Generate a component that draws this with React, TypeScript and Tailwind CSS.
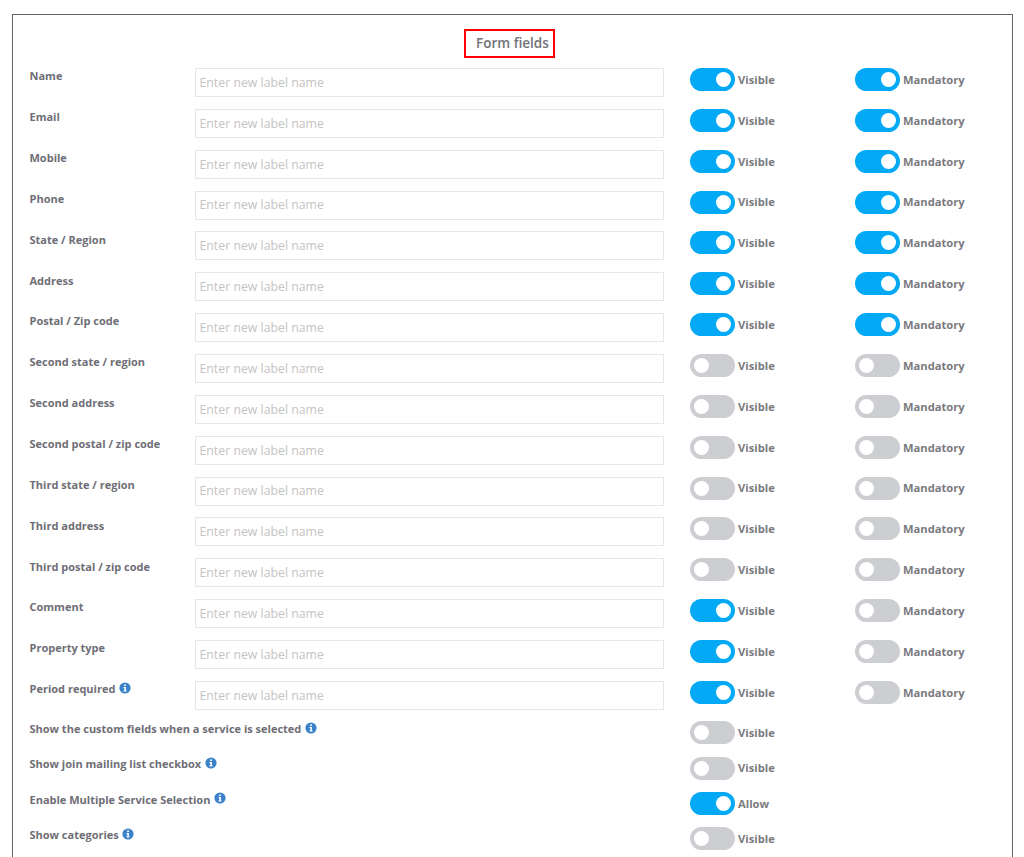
import React from "react";

type Row = { label: string; visible: boolean; mandatory: boolean; info?: boolean };

const rows: Row[] = [
  { label: "Name", visible: true, mandatory: true },
  { label: "Email", visible: true, mandatory: true },
  { label: "Mobile", visible: true, mandatory: true },
  { label: "Phone", visible: true, mandatory: true },
  { label: "State / Region", visible: true, mandatory: true },
  { label: "Address", visible: true, mandatory: true },
  { label: "Postal / Zip code", visible: true, mandatory: true },
  { label: "Second state / region", visible: false, mandatory: false },
  { label: "Second address", visible: false, mandatory: false },
  { label: "Second postal / zip code", visible: false, mandatory: false },
  { label: "Third state / region", visible: false, mandatory: false },
  { label: "Third address", visible: false, mandatory: false },
  { label: "Third postal / zip code", visible: false, mandatory: false },
  { label: "Comment", visible: true, mandatory: false },
  { label: "Property type", visible: true, mandatory: false },
  { label: "Period required", visible: true, mandatory: false, info: true },
];

const extras = [
  { label: "Show the custom fields when a service is selected", on: false, text: "Visible" },
  { label: "Show join mailing list checkbox", on: false, text: "Visible" },
  { label: "Enable Multiple Service Selection", on: true, text: "Allow" },
  { label: "Show categories", on: false, text: "Visible" },
];

const InfoIcon = () => (
  <svg viewBox="0 0 12 12" className="ml-[3.5px] mb-[3px] h-3 w-3 shrink-0">
    <circle cx="6" cy="6" r="5.6" fill="#3b82c9" />
    <rect x="5.2" y="2.4" width="1.7" height="1.6" fill="#fff" />
    <path d="M4.5 5h2.4v3.4h.7v1H4.5v-1h.8V6h-.8z" fill="#fff" />
  </svg>
);

const Toggle = ({ on, text }: { on: boolean; text: string }) => (
  <div className="flex items-center">
    <div
      className={
        "flex h-[23px] w-[45px] items-center rounded-full px-[4px] " +
        (on ? "justify-end bg-[#03a9f4]" : "justify-start bg-[#ccced2]")
      }
    >
      <div className="h-[15px] w-[15px] rounded-full bg-white" />
    </div>
    <span className="ml-[3.5px] text-[11.2px] font-bold leading-none text-[#7a7a80]">{text}</span>
  </div>
);

export default function App() {
  return (
    <div className="h-[857px] overflow-hidden bg-white font-['Open_Sans',sans-serif]">
      <div className="mx-[11.5px] mt-[14px] h-[900px] border border-[#666666] bg-white pl-[17px] pr-[12px]">
        <div className="flex h-[53px] justify-center pr-[11px] pt-[14px]">
          <div className="flex h-[29px] w-[91px] items-center border-[2.5px] border-[#ff0000] pl-[10.5px] text-[13.5px] font-semibold text-[#727278]">
            Form fields
          </div>
        </div>
        {rows.map((row) => (
          <div key={row.label} className="flex h-[40.87px] items-start">
            <div className="flex h-[17px] w-[165px] items-center text-[11px] font-bold text-[#6e6e76]">
              {row.label}
              {row.info && <InfoIcon />}
            </div>
            <div className="flex h-[29px] w-[469px] items-center border border-[#e6e6e6] px-[4px] pt-[1px] text-[12.3px] text-[#c4c4c4]">
              Enter new label name
            </div>
            <div className="ml-[26px] w-[165px]">
              <Toggle on={row.visible} text="Visible" />
            </div>
            <Toggle on={row.mandatory} text="Mandatory" />
          </div>
        ))}
        <div className="mt-[-0.5px]">
          {extras.map((extra) => (
            <div key={extra.label} className="flex h-[35.3px] items-start">
              <div className="flex h-[16px] w-[660px] items-center text-[11px] font-bold text-[#6e6e76]">
                {extra.label}
                <InfoIcon />
              </div>
              <Toggle on={extra.on} text={extra.text} />
            </div>
          ))}
        </div>
      </div>
    </div>
  );
}
